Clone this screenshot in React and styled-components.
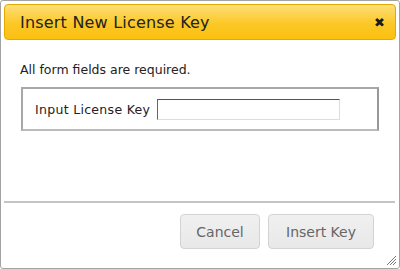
import React from "react";
import styled, { createGlobalStyle } from "styled-components";

const Global = createGlobalStyle`
  html, body { margin: 0; padding: 0; background: #fff; }
  * { box-sizing: border-box; }
`;

const Dialog = styled.div`
  position: relative;
  width: 400px;
  height: 269px;
  border: 1px solid #a3a3a3;
  border-radius: 3px;
  padding: 3px;
  background: #fff;
  display: flex;
  flex-direction: column;
  font-family: "DejaVu Sans", Verdana, sans-serif;
`;

const TitleBar = styled.div`
  height: 36px;
  border: 1px solid #e3a900;
  border-radius: 4px;
  background: linear-gradient(#fede77, #fcc826 55%, #fbc010);
  display: flex;
  align-items: center;
  justify-content: space-between;
  padding: 0 10px 0 15px;
  color: #222;
`;

const Title = styled.span`
  font-size: 16px;
  letter-spacing: 0.2px;
`;

const Close = styled.span`
  font-size: 13px;
  font-weight: bold;
  color: #1a1a1a;
  line-height: 1;
`;

const Body = styled.div`
  flex: 1;
  padding: 22px 14px 0 16px;
  font-size: 12.5px;
  color: #222;
`;

const Note = styled.p`
  margin: 0 0 10px;
`;

const Fieldset = styled.div`
  margin-left: 1px;
  width: 358px;
  height: 44px;
  border: 2px solid #a8a8a8;
  border-right-color: #999;
  border-bottom-color: #bbb;
  display: flex;
  align-items: center;
  padding-left: 12px;
  gap: 7px;
`;

const Label = styled.label`
  letter-spacing: 0.3px;
`;

const Input = styled.input`
  width: 183px;
  height: 21px;
  border: 1px solid;
  border-color: #555 #ddd #ddd #666;
  padding: 0 3px;
  font-size: 11px;
  outline: none;
`;

const Footer = styled.div`
  border-top: 2px solid #c4c4c4;
  height: 64px;
  margin: 0 1px 0 0;
  display: flex;
  justify-content: flex-end;
  align-items: flex-start;
  padding: 11px 21px 0 0;
  gap: 8px;
`;

const Button = styled.button`
  height: 35px;
  padding: 0 10px;
  min-width: ${(p) => p.w}px;
  border: 1px solid #d3d3d3;
  border-radius: 4px;
  background: linear-gradient(#f0f0f0, #e8e8e8);
  color: #666;
  font-family: "DejaVu Sans", Verdana, sans-serif;
  font-size: 14px;
`;

const Grip = styled.svg`
  position: absolute;
  right: 2px;
  bottom: 2px;
`;

export default function App() {
  return (
    <>
      <Global />
      <Dialog>
        <TitleBar>
          <Title>Insert New License Key</Title>
          <Close>✖</Close>
        </TitleBar>
        <Body>
          <Note>All form fields are required.</Note>
          <Fieldset>
            <Label>Input License Key</Label>
            <Input type="text" />
          </Fieldset>
        </Body>
        <Footer>
          <Button w={80}>Cancel</Button>
          <Button w={106}>Insert Key</Button>
        </Footer>
        <Grip width="11" height="11" viewBox="0 0 11 11">
          <g stroke="#777" strokeWidth="1">
            <line x1="10" y1="1" x2="1" y2="10" />
            <line x1="10" y1="4" x2="4" y2="10" />
            <line x1="10" y1="7" x2="7" y2="10" />
          </g>
        </Grip>
      </Dialog>
    </>
  );
}
